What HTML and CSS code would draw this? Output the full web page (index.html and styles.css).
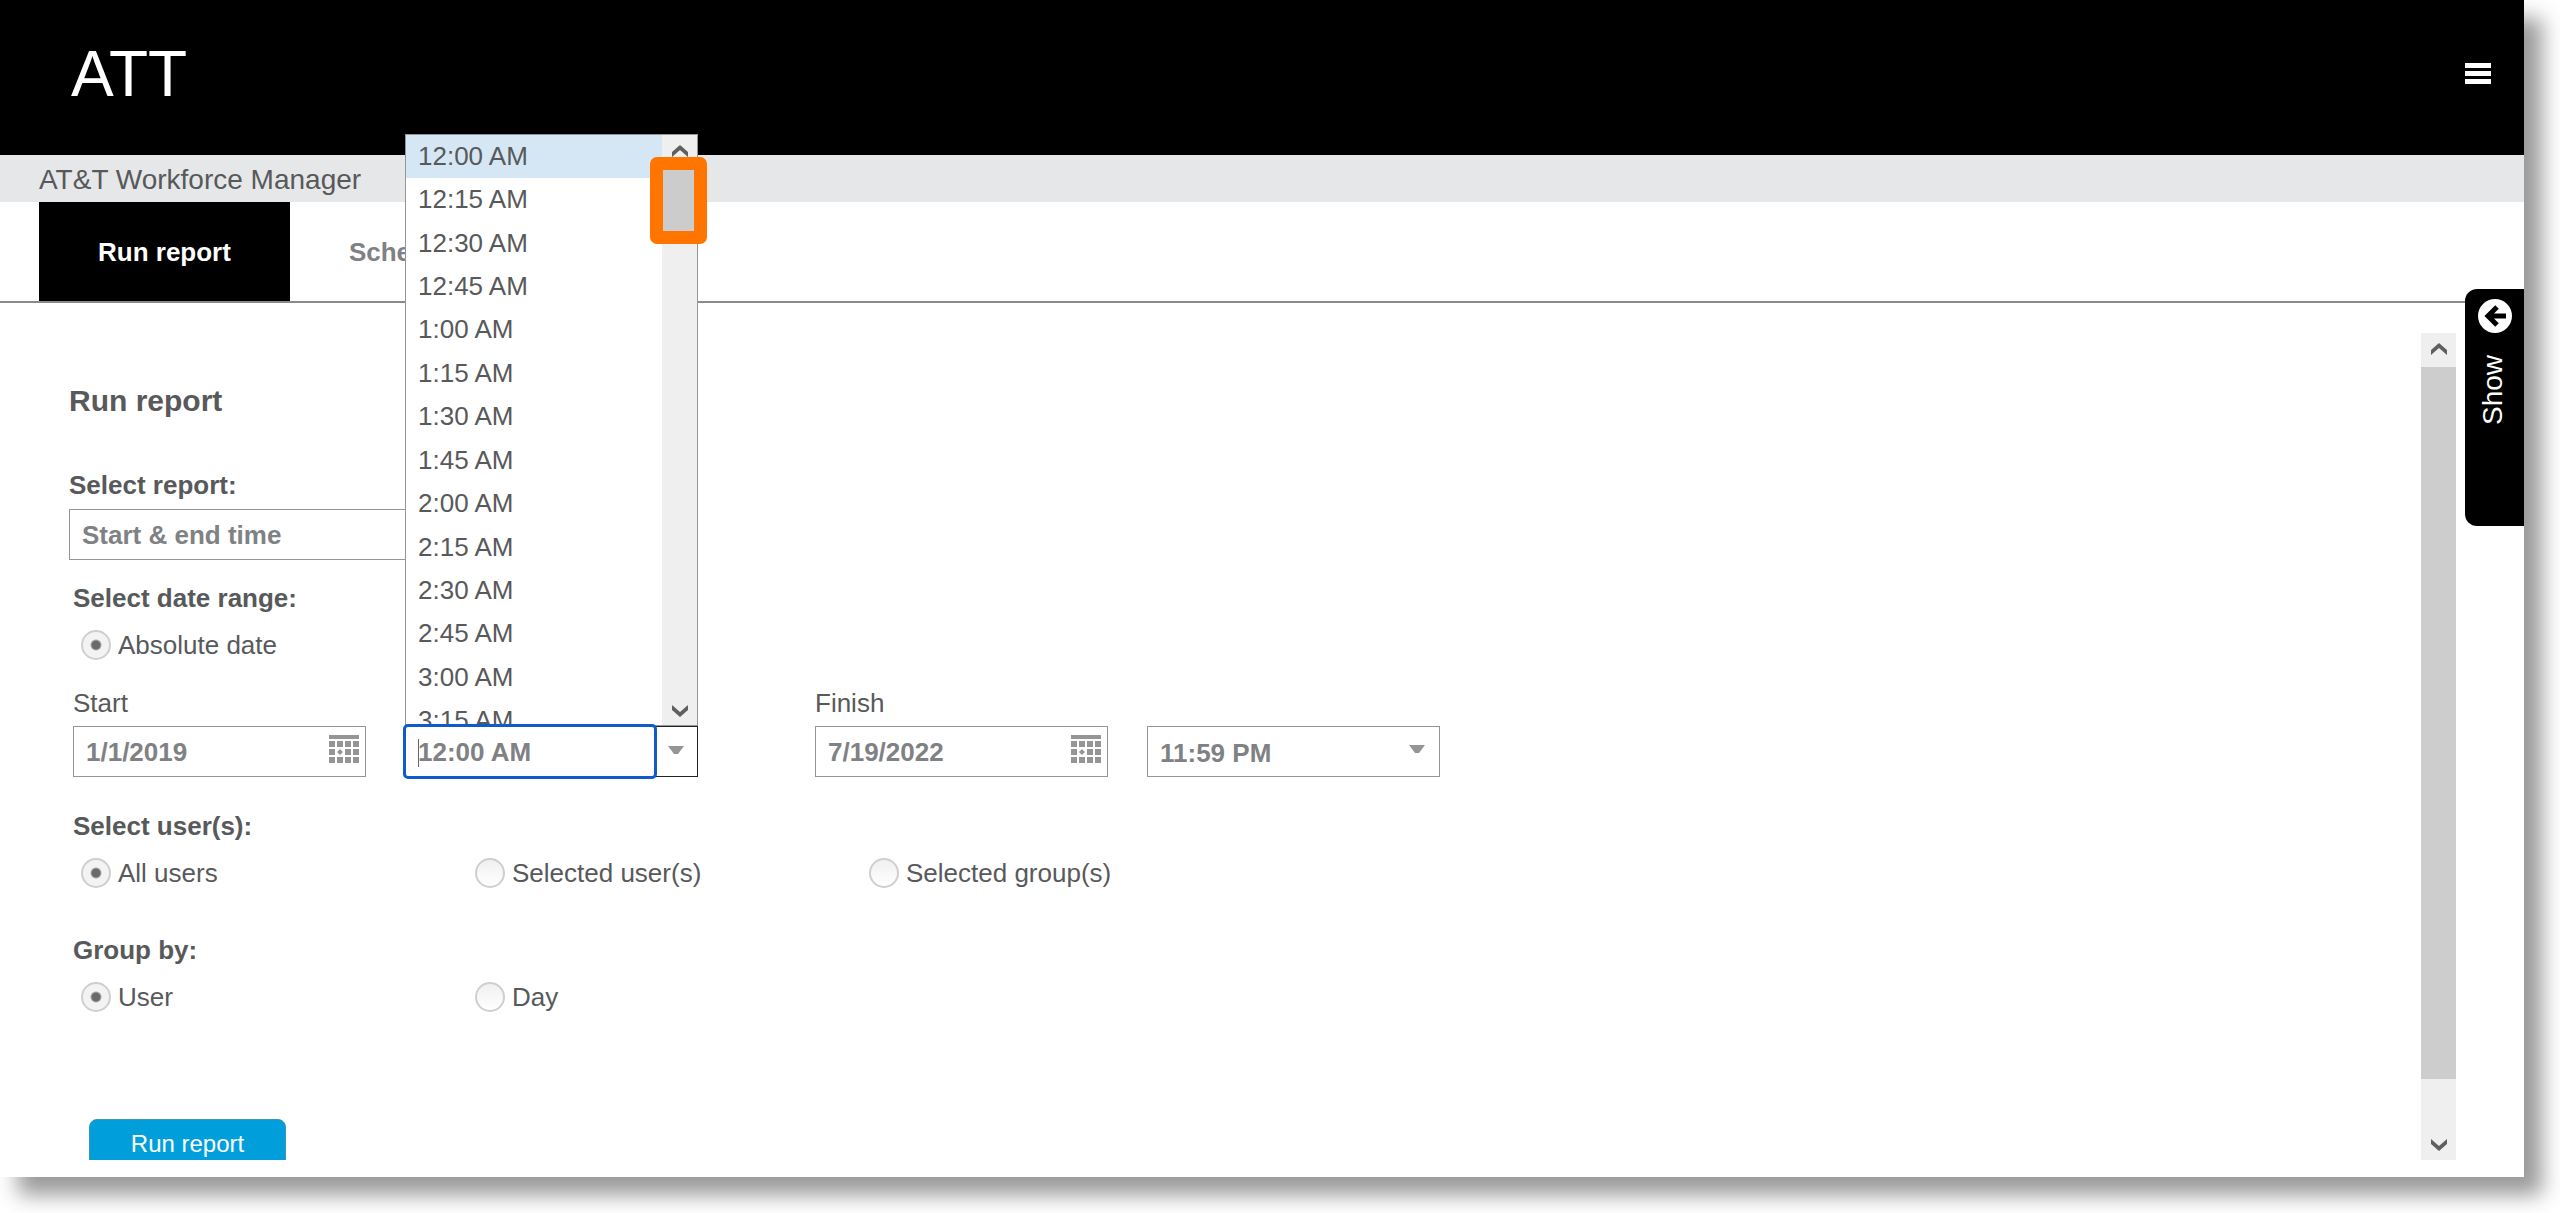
FILE: index.html
```
<!DOCTYPE html>
<html lang="en">
<head>
<meta charset="utf-8">
<title>AT&amp;T Workforce Manager</title>
<link rel="stylesheet" href="styles.css">
</head>
<body>
<svg class="sprite" aria-hidden="true">
  <symbol id="calendar" viewBox="0 0 30 28">
    <path d="M0 0h30v4H0zM0 6h6v6H0zM8 6h6v6H8zM16 6h6v6h-6zM24 6h6v6h-6zM0 14h6v6H0zM16 14h6v6h-6zM24 14h6v6h-6zM0 22h6v6H0zM8 22h6v6H8zM16 22h6v6h-6zM24 22h6v6h-6zM11 14l3 3-3 3-3-3z"/>
  </symbol>
  <symbol id="triangle" viewBox="0 0 16 9"><path d="M0 0h16L10 8H6z"/></symbol>
  <symbol id="chevron-up" viewBox="0 0 16 12"><path d="M8 0l8 7v5L8 5 0 12V7z"/></symbol>
  <symbol id="chevron-down" viewBox="0 0 16 12"><path d="M8 12l8-7V0L8 7 0 0v5z"/></symbol>
</svg>
<div class="app">
  <header class="header">
    <h1 class="brand">ATT</h1>
    <button class="menu-button" aria-label="Menu">
      <svg width="26" height="22" viewBox="0 0 26 22"><path d="M0 0h26v5H0zM0 8h26v5H0zM0 16h26v5H0z"/></svg>
    </button>
  </header>
  <div class="subheader">AT&amp;T Workforce Manager</div>
  <nav class="tabs">
    <a class="tab tab-active" href="#run">Run report</a>
    <a class="tab" href="#schedule">Schedule</a>
  </nav>
  <main class="main">
    <form class="form">
      <h2 class="title">Run report</h2>
      <label class="label" for="report">Select report:</label>
      <select class="field report" id="report"><option>Start &amp; end time</option></select>
      <div class="section">
        <div class="label label-range" id="range-label">Select date range:</div>
        <div class="radios" role="radiogroup" aria-labelledby="range-label">
          <label class="radio"><input type="radio" name="range" checked>Absolute date</label>
        </div>
        <div class="dates">
          <div class="date-group">
            <label class="caption" for="start">Start</label>
            <div class="date-row">
              <div class="field">
                <input class="text" id="start" type="text" value="1/1/2019">
                <button class="calendar-button" type="button" aria-label="Choose start date"><svg width="30" height="28"><use href="#calendar"/></svg></button>
              </div>
              <div class="field combo">
                <input class="text combo-text" type="text" role="combobox" aria-label="Start time" aria-expanded="true" aria-controls="times" value="12:00 AM">
                <button class="arrow-button" type="button" aria-label="Start times"><svg width="16" height="9"><use href="#triangle"/></svg></button>
                <div class="dropdown">
                  <ul class="times" id="times" role="listbox">
                    <li class="selected" role="option" aria-selected="true">12:00 AM</li>
                    <li role="option">12:15 AM</li>
                    <li role="option">12:30 AM</li>
                    <li role="option">12:45 AM</li>
                    <li role="option">1:00 AM</li>
                    <li role="option">1:15 AM</li>
                    <li role="option">1:30 AM</li>
                    <li role="option">1:45 AM</li>
                    <li role="option">2:00 AM</li>
                    <li role="option">2:15 AM</li>
                    <li role="option">2:30 AM</li>
                    <li role="option">2:45 AM</li>
                    <li role="option">3:00 AM</li>
                    <li role="option">3:15 AM</li>
                  </ul>
                  <div class="scrollbar">
                    <svg width="16" height="12"><use href="#chevron-up"/></svg>
                    <svg width="16" height="12"><use href="#chevron-down"/></svg>
                  </div>
                  <div class="highlight"></div>
                </div>
              </div>
            </div>
          </div>
          <div class="date-group">
            <label class="caption" for="finish">Finish</label>
            <div class="date-row">
              <div class="field">
                <input class="text" id="finish" type="text" value="7/19/2022">
                <button class="calendar-button" type="button" aria-label="Choose finish date"><svg width="30" height="28"><use href="#calendar"/></svg></button>
              </div>
              <div class="field">
                <select class="text" aria-label="Finish time"><option>11:59 PM</option></select>
                <svg class="select-arrow" width="16" height="9"><use href="#triangle"/></svg>
              </div>
            </div>
          </div>
        </div>
        <div class="label label-users" id="users-label">Select user(s):</div>
        <div class="radios" role="radiogroup" aria-labelledby="users-label">
          <label class="radio"><input type="radio" name="users" checked>All users</label>
          <label class="radio"><input type="radio" name="users">Selected user(s)</label>
          <label class="radio"><input type="radio" name="users">Selected group(s)</label>
        </div>
        <div class="label label-group" id="group-label">Group by:</div>
        <div class="radios" role="radiogroup" aria-labelledby="group-label">
          <label class="radio"><input type="radio" name="group" checked>User</label>
          <label class="radio"><input type="radio" name="group">Day</label>
        </div>
      </div>
      <div class="actions"><button class="submit" type="button">Run report</button></div>
    </form>
    <div class="scrollbar page-scrollbar">
      <svg width="16" height="12"><use href="#chevron-up"/></svg>
      <div class="thumb"></div>
      <svg width="16" height="12"><use href="#chevron-down"/></svg>
    </div>
  </main>
  <button class="show" type="button">
    <svg width="34" height="34" viewBox="0 0 34 34"><circle cx="17" cy="17" r="17" fill="#fff"/><path d="M19 8l-9 9 9 9M10 17h18" fill="none" stroke="#000" stroke-width="5"/></svg>
    <span class="show-text">Show</span>
  </button>
</div>
</body>
</html>
```
FILE: styles.css
```
* { box-sizing: border-box; }

body {
  margin: 0;
  padding: 0 36px 36px 0;
  background: #fff;
  color: #58595b;
  font: 26px/30px Arial, "Liberation Sans", sans-serif;
}

button, input, select { font: inherit; color: inherit; margin: 0; }
button { border: 0; padding: 0; background: none; }
svg { display: block; }
.sprite { display: none; }

.app {
  position: relative;
  background: #fff;
  padding-bottom: 17px;
  box-shadow: 18px 18px 20px rgba(0, 0, 0, 0.4);
}

.header {
  display: flex;
  justify-content: space-between;
  align-items: center;
  height: 155px;
  padding: 0 33px 8px 71px;
  background: #000;
  color: #fff;
}
.brand { margin: 0; font-size: 64px; line-height: 72px; font-weight: 400; }
.menu-button { fill: #fff; }

.subheader {
  padding: 2px 39px 0;
  background: #e6e7e8;
  font-size: 28px;
  line-height: 45px;
}

.tabs {
  display: flex;
  padding-left: 39px;
  border-bottom: 2px solid #8a8a8a;
}
.tab {
  padding: 2px 59px 0;
  line-height: 97px;
  font-weight: 700;
  color: #808184;
  text-decoration: none;
}
.tab-active { background: #000; color: #fff; }

.main {
  display: flex;
  justify-content: space-between;
  padding: 30px 68px 0 69px;
}

.form { padding-top: 51px; }
.title { margin: 0 0 52px; font-size: 30px; line-height: 34px; }
.label { display: block; font-weight: 700; }

.field {
  position: relative;
  display: flex;
  align-items: center;
  width: 293px;
  height: 51px;
  border: 1px solid #959595;
  background: #fff;
  color: #808184;
  font-weight: 700;
}
.report {
  appearance: none;
  width: 400px;
  margin: 9px 0 23px;
  padding: 0 12px;
}
.text {
  appearance: none;
  flex: 1;
  min-width: 0;
  height: 49px;
  padding: 2px 12px 0;
  border: 0;
  background: none;
}
.calendar-button { padding: 0 6px 5px; fill: #959595; }
.select-arrow { margin: 0 14px 5px 0; fill: #959595; }

.section { margin-left: 4px; }
.label-range { margin-bottom: 17px; }
.label-users { margin: 34px 0 17px; }
.label-group { margin: 47px 0 17px; }

.radios {
  display: grid;
  grid-template-columns: repeat(3, 394px);
  padding-left: 8px;
}
.radio { display: flex; align-items: center; gap: 7px; }
.radio input {
  appearance: none;
  width: 30px;
  height: 30px;
  border: 2px solid #cfcfcf;
  border-radius: 50%;
  background: linear-gradient(#f0f0f0, #fff);
}
.radio input:checked {
  background: radial-gradient(circle, #6a6a6a 4px, #f3f3f3 6px);
}

.dates { display: flex; gap: 117px; margin-top: 28px; }
.caption { display: block; margin-bottom: 8px; }
.date-row { display: flex; gap: 39px; }

.combo { border-color: #222; }
.combo-text {
  z-index: 2;
  outline: 3px solid #0f5bcb;
  border-radius: 2px;
  background: linear-gradient(#666, #666) 12px 12px / 1px 28px no-repeat #fff;
}
.arrow-button {
  display: grid;
  place-items: center;
  width: 43px;
  height: 46px;
  align-self: flex-start;
  fill: #959595;
}

.dropdown {
  position: absolute;
  z-index: 1;
  left: -1px;
  bottom: 50px;
  display: flex;
  width: 293px;
  height: 592px;
  border: 1px solid #959595;
  background: #fff;
  color: #58595b;
  font-weight: 400;
}
.times {
  display: grid;
  grid-auto-rows: 1fr;
  flex: 1;
  height: 608px;
  margin: 0;
  padding: 0;
  list-style: none;
  clip-path: inset(0 0 18px);
}
.times li { display: flex; align-items: center; padding: 0 0 2px 12px; }
.times .selected { background: #d5e7f5; }

.scrollbar {
  display: flex;
  flex-direction: column;
  justify-content: space-between;
  align-items: center;
  width: 35px;
  padding: 10px 0 8px;
  background: #efefef;
  fill: #5f5f5f;
}
.highlight {
  position: absolute;
  right: -10px;
  top: 22px;
  width: 57px;
  height: 87px;
  border: 13px solid #ff7500;
  border-radius: 7px;
  background: #ccc;
}

.actions { height: 41px; margin: 107px 0 0 20px; overflow: hidden; }
.submit {
  width: 197px;
  height: 48px;
  padding-top: 2px;
  border: 1px solid #3b94b8;
  border-radius: 8px;
  background: #009fdb;
  color: #fff;
  font-size: 24px;
}

.page-scrollbar { padding-bottom: 9px; }
.page-scrollbar .thumb {
  flex: 1;
  width: 35px;
  margin: 12px 0 60px;
  background: #cdcdcd;
}

.show {
  position: absolute;
  right: 0;
  top: 289px;
  display: flex;
  flex-direction: column;
  align-items: center;
  gap: 22px;
  width: 59px;
  height: 237px;
  padding-top: 10px;
  border-radius: 12px 0 0 12px;
  background: #000;
  color: #fff;
}
.show-text {
  margin-right: 4px;
  writing-mode: vertical-rl;
  transform: rotate(180deg);
  font-size: 28px;
}
```
